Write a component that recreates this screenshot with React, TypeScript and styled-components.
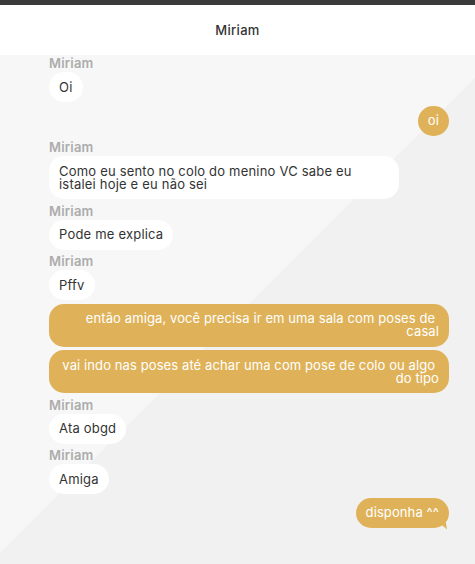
import React from "react";
import styled, { createGlobalStyle, css } from "styled-components";

const GlobalStyle = createGlobalStyle`
  html, body { margin: 0; padding: 0; }
  body {
    font-family: Inter, "Noto Sans", sans-serif;
    -webkit-font-smoothing: antialiased;
  }
`;

const Page = styled.div`
  display: flex;
  flex-direction: column;
  width: 475px;
  height: 564px;
  overflow: hidden;
`;

const TopBar = styled.div`
  height: 5px;
  flex: none;
  background: #3a3a3a;
`;

const Header = styled.header`
  height: 50px;
  flex: none;
  background: #ffffff;
  display: flex;
  align-items: center;
  justify-content: center;
  font-size: 13px;
  font-weight: 500;
  letter-spacing: 0.3px;
  color: #333333;
`;

const ChatArea = styled.main`
  flex: 1;
  display: flex;
  flex-direction: column;
  gap: 3.5px;
  padding: 0 26px 0 49px;
  background: linear-gradient(135deg, #f7f7f7 50.6%, #f1f1f1 50.6%);
`;

const Message = styled.div<{ $mine?: boolean }>`
  display: flex;
  flex-direction: column;
  align-items: ${(p) => (p.$mine ? "flex-end" : "flex-start")};
`;

const SenderName = styled.div`
  height: 17px;
  line-height: 17px;
  font-size: 13px;
  font-weight: 600;
  letter-spacing: 0.2px;
  color: #acacac;
`;

const Bubble = styled.div<{ $mine?: boolean; $tail?: boolean }>`
  position: relative;
  box-sizing: border-box;
  padding: 8.5px 10px;
  border-radius: 15px;
  font-size: 13px;
  line-height: 13px;
  ${(p) =>
    p.$mine
      ? css`
          max-width: 400px;
          background: #dfb259;
          color: #ffffff;
          text-align: right;
          letter-spacing: 0.1px;
          white-space: break-spaces;
        `
      : css`
          max-width: 350px;
          background: #ffffff;
          color: #333333;
          letter-spacing: 0.2px;
        `}
  ${(p) =>
    p.$tail &&
    css`
      &::after {
        content: "";
        position: absolute;
        right: 2px;
        bottom: -2px;
        width: 10px;
        height: 9px;
        background: #dfb259;
        clip-path: polygon(0 0, 85% 0, 100% 100%);
      }
    `}
`;

type Msg = { from: "them" | "me"; text: string; tail?: boolean };

const messages: Msg[] = [
  { from: "them", text: "Oi" },
  { from: "me", text: "oi" },
  { from: "them", text: "Como eu sento no colo do menino VC sabe eu istalei hoje e eu não sei" },
  { from: "them", text: "Pode me explica" },
  { from: "them", text: "Pffv" },
  { from: "me", text: "então amiga, você precisa ir em uma sala com poses de casal" },
  { from: "me", text: "vai indo nas poses até achar uma com pose de colo ou algo do tipo" },
  { from: "them", text: "Ata obgd" },
  { from: "them", text: "Amiga" },
  { from: "me", text: "disponha ^^", tail: true },
];

export default function App() {
  return (
    <Page>
      <GlobalStyle />
      <TopBar />
      <Header>Miriam</Header>
      <ChatArea>
        {messages.map((m, i) => (
          <Message key={i} $mine={m.from === "me"}>
            {m.from === "them" && <SenderName>Miriam</SenderName>}
            <Bubble $mine={m.from === "me"} $tail={m.tail}>
              {m.text}
            </Bubble>
          </Message>
        ))}
      </ChatArea>
    </Page>
  );
}
